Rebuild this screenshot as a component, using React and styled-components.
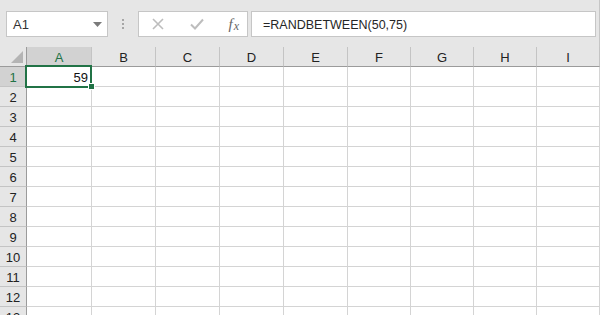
import React from 'react';
import styled, { createGlobalStyle } from 'styled-components';

const GlobalStyle = createGlobalStyle`
  html, body {
    margin: 0;
    padding: 0;
    background: #ffffff;
    overflow: hidden;
  }
  body {
    font-family: "Liberation Sans", Arial, sans-serif;
  }
`;

const COLUMNS = ['A', 'B', 'C', 'D', 'E', 'F', 'G', 'H', 'I'];
const ROWS = [1, 2, 3, 4, 5, 6, 7, 8, 9, 10, 11, 12, 13];
const GREEN = '#217346';

const App = () => {
  return (
    <Page>
      <GlobalStyle />
      <Toolbar>
        <NameBox>
          <NameText>A1</NameText>
          <svg width="9" height="5" viewBox="0 0 9 5">
            <polygon points="0,0 9,0 4.5,5" fill="#7a7a7a" />
          </svg>
        </NameBox>
        <Grip>
          <Dot />
          <Dot />
          <Dot />
        </Grip>
        <ActionBox>
          <ActionButton>
            <svg width="12" height="12" viewBox="0 0 12 12">
              <path d="M1 1 L11 11 M11 1 L1 11" stroke="#bdbdbd" strokeWidth="1.6" />
            </svg>
          </ActionButton>
          <ActionButton>
            <svg width="14" height="12" viewBox="0 0 14 12">
              <path d="M1 6.5 L5 10.5 L13 1.5" stroke="#bdbdbd" strokeWidth="2" fill="none" />
            </svg>
          </ActionButton>
          <FxButton>
            <i>f</i>
            <Sub>x</Sub>
          </FxButton>
        </ActionBox>
        <FormulaBar>=RANDBETWEEN(50,75)</FormulaBar>
      </Toolbar>

      <Sheet>
        <Corner>
          <svg width="12" height="12" viewBox="0 0 12 12">
            <polygon points="12,0 12,12 0,12" fill="#b4b4b4" />
          </svg>
        </Corner>
        {COLUMNS.map((col) => (
          <ColHeader key={col} $selected={col === 'A'}>
            {col}
          </ColHeader>
        ))}
        {ROWS.map((row) => (
          <React.Fragment key={row}>
            <RowHeader $selected={row === 1}>{row}</RowHeader>
            {COLUMNS.map((col) =>
              row === 1 && col === 'A' ? (
                <ActiveCell key={col}>
                  59
                  <FillHandle />
                </ActiveCell>
              ) : (
                <Cell key={col} />
              )
            )}
          </React.Fragment>
        ))}
      </Sheet>
    </Page>
  );
};

export default App;

const Page = styled.div`
  width: 600px;
  height: 315px;
  overflow: hidden;
  background: #ffffff;
  box-sizing: border-box;
`;

const Toolbar = styled.div`
  display: flex;
  align-items: flex-start;
  height: 47px;
  box-sizing: border-box;
  padding: 11px 3px 0 6px;
  background: #e6e6e6;
  border-right: 1px solid #c6c6c6;
`;

const Box = styled.div`
  height: 26px;
  box-sizing: border-box;
  background: #ffffff;
  border: 1px solid #c6c6c6;
  display: flex;
  align-items: center;
`;

const NameBox = styled(Box)`
  width: 102px;
  padding: 0 5px 0 6px;
  justify-content: space-between;
`;

const NameText = styled.span`
  font-size: 13px;
  color: #333333;
  padding-top: 1px;
`;

const Grip = styled.div`
  width: 30px;
  height: 26px;
  display: flex;
  flex-direction: column;
  align-items: center;
  justify-content: center;
  gap: 2px;
`;

const Dot = styled.span`
  width: 2px;
  height: 2px;
  background: #a6a6a6;
`;

const ActionBox = styled(Box)`
  width: 110px;
  padding: 0 8px 0 12px;
  justify-content: space-between;
  margin-right: 3px;
`;

const ActionButton = styled.span`
  width: 14px;
  display: flex;
  justify-content: center;
  align-items: center;
`;

const FxButton = styled.span`
  font-family: "Liberation Serif", "Times New Roman", serif;
  font-size: 15px;
  color: #666666;
  display: flex;
  align-items: baseline;
  padding-top: 1px;
`;

const Sub = styled.i`
  font-size: 12px;
  margin-left: 1px;
  position: relative;
  top: 1px;
`;

const FormulaBar = styled(Box)`
  flex: 1;
  padding: 1px 0 0 11px;
  font-size: 12.5px;
  color: #262626;
`;

const Sheet = styled.div`
  display: grid;
  grid-template-columns: 27px 65px 64px 64px 64px 64px 63px 63px 63px 1fr;
  grid-auto-rows: 20px;
`;

const HeaderBase = styled.div`
  box-sizing: border-box;
  display: flex;
  align-items: center;
  justify-content: center;
  font-size: 13px;
  background: ${(p) => (p.$selected ? '#d2d2d2' : '#e6e6e6')};
  color: ${(p) => (p.$selected ? GREEN : '#222222')};
`;

const Corner = styled(HeaderBase)`
  justify-content: flex-end;
  align-items: flex-end;
  padding: 0 3px 3px 0;
  border-right: 1px solid #9b9b9b;
  border-bottom: 1px solid #9b9b9b;
`;

const ColHeader = styled(HeaderBase)`
  border-right: 1px solid #c4c4c4;
  border-bottom: 1px solid #9b9b9b;
  padding-top: 1px;
`;

const RowHeader = styled(HeaderBase)`
  border-right: 1px solid #9b9b9b;
  border-bottom: 1px solid #c4c4c4;
  padding-top: 2px;
`;

const Cell = styled.div`
  box-sizing: border-box;
  border-right: 1px solid #d4d4d4;
  border-bottom: 1px solid #d4d4d4;
`;

const ActiveCell = styled(Cell)`
  position: relative;
  display: flex;
  align-items: flex-end;
  justify-content: flex-end;
  padding: 0 3px 1px 0;
  font-size: 13px;
  color: #111111;

  &::before {
    content: '';
    position: absolute;
    left: -2px;
    top: -2px;
    width: 67px;
    height: 23px;
    border: 2px solid ${GREEN};
    box-sizing: border-box;
  }
`;

const FillHandle = styled.span`
  position: absolute;
  right: -4px;
  bottom: -4px;
  width: 5px;
  height: 5px;
  background: ${GREEN};
  border: 1px solid #ffffff;
`;
